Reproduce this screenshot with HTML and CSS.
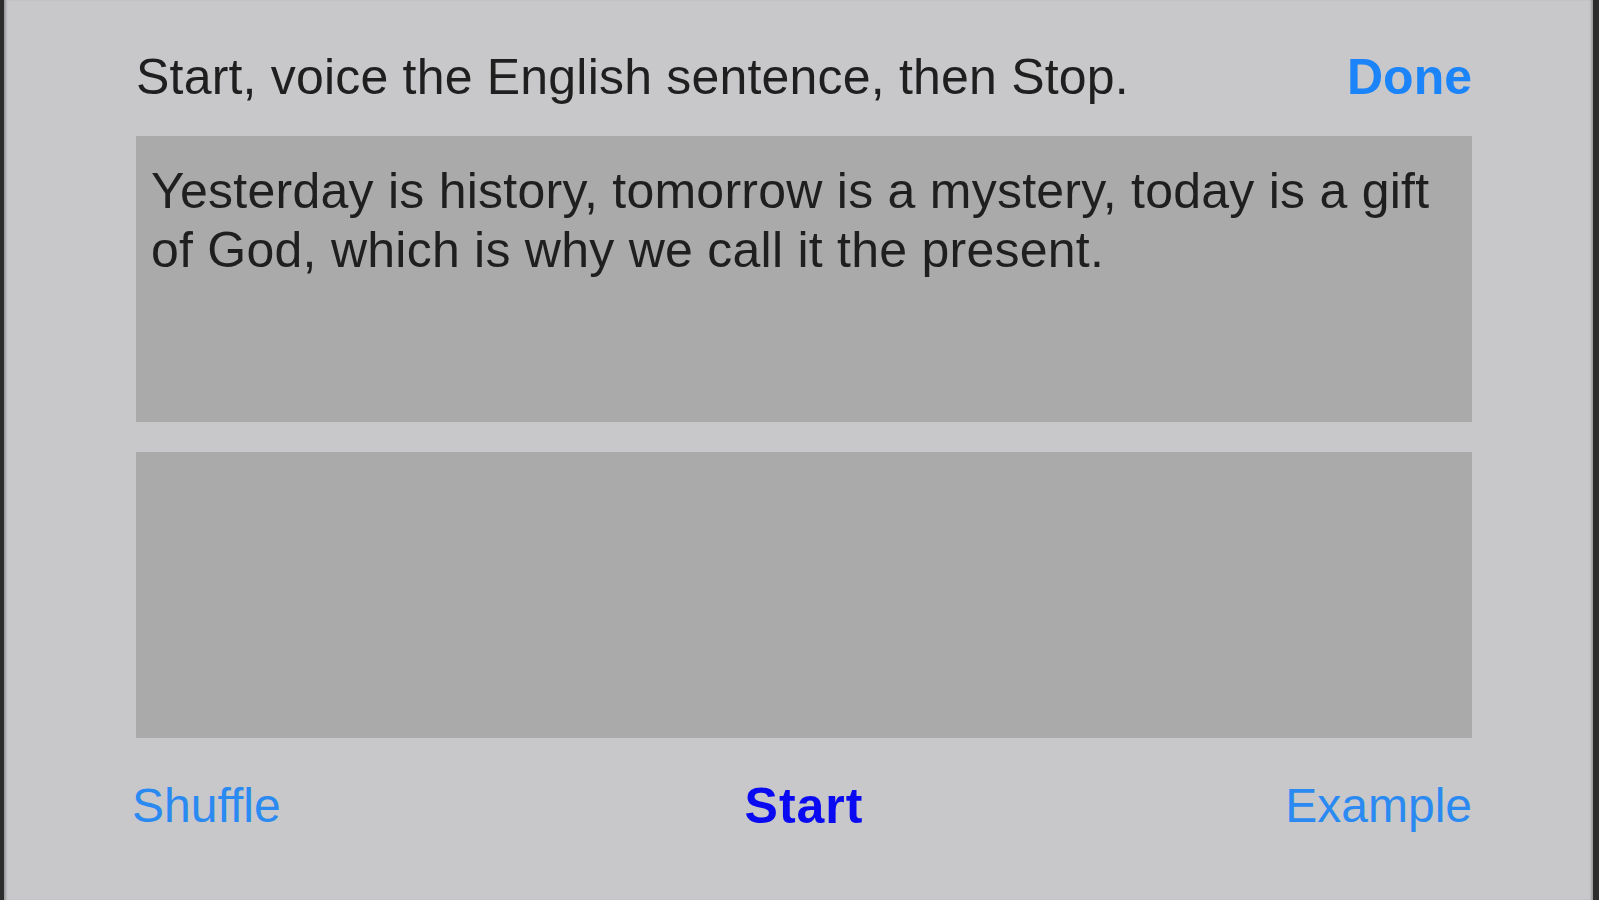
FILE: index.html
```html
<!DOCTYPE html>
<html lang="en">
<head>
<meta charset="utf-8">
<title>Voice practice</title>
<link rel="stylesheet" href="styles.css">
</head>
<body>
<div class="screen">
  <div class="panel">
    <header class="header">
      <p class="instruction">Start, voice the English sentence, then Stop.</p>
      <button class="btn btn-done">Done</button>
    </header>
    <div class="box box-source">Yesterday is history, tomorrow is a mystery, today is a gift of God, which is why we call it the present.</div>
    <div class="box box-result"></div>
    <footer class="actions">
      <button class="btn btn-link btn-shuffle">Shuffle</button>
      <button class="btn btn-start">Start</button>
      <button class="btn btn-link btn-example">Example</button>
    </footer>
  </div>
</div>
</body>
</html>
```

FILE: styles.css
```css
html, body {
  margin: 0;
  padding: 0;
  height: 100%;
}
body {
  background: #2c2c2c;
  font-family: "Liberation Sans", Arial, sans-serif;
  overflow: hidden;
}
.screen {
  margin: 0 6px 0 4px;
  height: 900px;
  background: #c8c8ca;
  box-shadow: inset 3px 0 2px -1px #9a9a9c, inset -3px 0 2px -1px #9a9a9c;
}
.panel {
  margin: 0 121px 0 132px;
  padding-top: 47px;
  display: flex;
  flex-direction: column;
}
.header {
  display: flex;
  justify-content: space-between;
  align-items: baseline;
  height: 89px;
}
.instruction {
  margin: 0;
  font-size: 50px;
  letter-spacing: 0.2px;
  color: #1f1f1f;
  line-height: 60px;
}
.btn {
  background: none;
  border: 0;
  padding: 0;
  font-family: inherit;
  font-size: 50px;
  line-height: 60px;
  cursor: pointer;
}
.btn-done {
  color: #1a84f8;
  font-weight: bold;
}
.box {
  background: #aaaaaa;
  height: 286px;
  box-sizing: border-box;
}
.box-source {
  padding: 26px 20px 0 15px;
  font-size: 50px;
  letter-spacing: 0.25px;
  line-height: 59px;
  color: #1f1f1f;
}
.box-result {
  margin-top: 30px;
}
.actions {
  display: grid;
  grid-template-columns: 1fr auto 1fr;
  align-items: center;
  margin-top: 38px;
}
.btn-link {
  color: #2a8af2;
  font-weight: normal;
  font-size: 48px;
}
.btn-shuffle {
  justify-self: start;
  margin-left: -4px;
}
.btn-example {
  justify-self: end;
}
.btn-start {
  justify-self: center;
  color: #0a0af2;
  font-weight: bold;
  letter-spacing: 1px;
}
```
